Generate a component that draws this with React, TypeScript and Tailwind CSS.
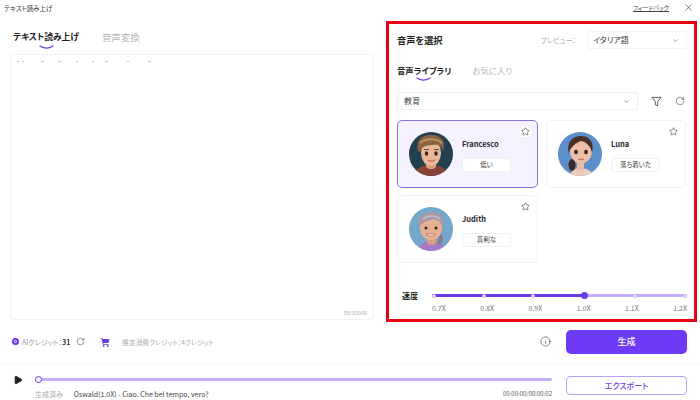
import { ChevronDown, Info, Play, RotateCw, Star, X } from "lucide-react";

const font = "[font-family:'Noto_Sans_CJK_JP',sans-serif] [font-feature-settings:'palt']";

function Smile({ className }: { className: string }) {
  return (
    <svg className={className} width="15" height="4" viewBox="0 0 15 4" fill="none">
      <path d="M1 1C5 3.6 10 3.6 14 1" stroke="#6d3be8" strokeWidth="1.3" strokeLinecap="round" />
    </svg>
  );
}

function Francesco() {
  return (
    <svg width="44" height="44" viewBox="0 0 44 44">
      <clipPath id="fr"><circle cx="22" cy="22" r="22" /></clipPath>
      <g clipPath="url(#fr)">
        <rect width="44" height="44" fill="#22404f" />
        <path d="M5 44C6 36 13 33 22 33S38 36 39 44Z" fill="#8a4238" />
        <path d="M17 28h10v7c-3 3-7 3-10 0Z" fill="#d99c7c" />
        <ellipse cx="22" cy="21" rx="10" ry="13" fill="#eab897" />
        <path d="M9 19C6 8 14 2 23 3C33 3 37 10 34 19C33 14 29 12 23 13C18 14 13 13 11 20Z" fill="#8a6340" />
        <path d="M11 11C17 6 27 6 33 11" stroke="#b8935f" strokeWidth="2" fill="none" />
        <ellipse cx="17.500" cy="21.500" rx="1.600" ry="2.200" fill="#2b2320" />
        <ellipse cx="27" cy="21.500" rx="1.600" ry="2.200" fill="#2b2320" />
        <path d="M15 17.500h5M25 17.500h5" stroke="#6b4a30" strokeWidth="1" />
        <path d="M18.500 28C21 29.500 24 29.500 26 28" stroke="#a55e4c" strokeWidth="1" fill="none" />
      </g>
    </svg>
  );
}

function Luna() {
  return (
    <svg width="44" height="44" viewBox="0 0 44 44">
      <clipPath id="lu"><circle cx="22" cy="22" r="22" /></clipPath>
      <g clipPath="url(#lu)">
        <rect width="44" height="44" fill="#5b8fc9" />
        <path d="M12 44C13 38 17 36 22 36S34 38 35 44Z" fill="#eccdb9" />
        <path d="M19 29h7v8c-2 2-5 2-7 0Z" fill="#e9bca3" />
        <ellipse cx="14" cy="33" rx="3.500" ry="6" fill="#3c2a26" />
        <ellipse cx="23" cy="19" rx="11" ry="12.500" fill="#eebfa6" />
        <path d="M11 21C8 10 15 4 23 4C31 4 37 10 34 21C33 15 29 10 23 9C18 11 13 14 11 21Z" fill="#4a302a" />
        <ellipse cx="18" cy="20" rx="1.800" ry="2.200" fill="#2b2320" />
        <ellipse cx="28" cy="20" rx="1.800" ry="2.200" fill="#2b2320" />
        <path d="M20 27C22 28 24 28 26 27" stroke="#b4604f" strokeWidth="1" fill="none" />
      </g>
    </svg>
  );
}

function Judith() {
  return (
    <svg width="44" height="44" viewBox="0 0 44 44">
      <clipPath id="ju"><circle cx="22" cy="22" r="22" /></clipPath>
      <g clipPath="url(#ju)">
        <rect width="44" height="44" fill="#74a7c9" />
        <path d="M9 44C10 37 16 34 22 34S36 37 37 44Z" fill="#a779c4" />
        <path d="M18 29h9v7c-3 3-6 3-9 0Z" fill="#d99f84" />
        <path d="M27 26C33 28 33 34 29 37" stroke="#8a7c88" strokeWidth="4" fill="none" />
        <ellipse cx="22" cy="21" rx="11" ry="12" fill="#e8b193" />
        <path d="M10 21C7 10 15 5 23 5C31 5 36 11 34 21C33 16 29 13 25 12C20 14 13 14 10 21Z" fill="#a79aa6" />
        <path d="M14 12C19 8 27 8 31 12" stroke="#c9bfc9" strokeWidth="1.400" fill="none" />
        <circle cx="17" cy="21" r="1.500" fill="#2b2320" />
        <circle cx="27" cy="21" r="1.500" fill="#2b2320" />
        <path d="M17 27C19 29.500 25 29.500 27 27Z" fill="#fff" stroke="#a55e4c" strokeWidth="0.7" />
      </g>
    </svg>
  );
}

const voices = [
  { name: "Francesco", tag: "低い", avatar: <Francesco />, active: true },
  { name: "Luna", tag: "落ち着いた", avatar: <Luna />, active: false },
  { name: "Judith", tag: "真剣な", avatar: <Judith />, active: false },
];

const speeds = ["0.7X", "0.8X", "0.9X", "1.0X", "1.1X", "1.2X"];

function VoiceCard({ voice }: { voice: (typeof voices)[number] }) {
  return (
    <div
      className={
        voice.active
          ? "relative flex h-[68px] items-center rounded-[5px] border border-[#8f6fe6] bg-[#f5f1ff] pl-[11px]"
          : "relative flex h-[68px] items-center rounded-[5px] border border-[#f3f3f5] bg-white pl-[11px]"
      }
    >
      {voice.avatar}
      <div className="ml-[9px] flex flex-col items-start pt-[2px]">
        <span className="text-[7.5px] leading-[12px] font-bold text-[#2b2b33]">{voice.name}</span>
        <span className="mt-[8px] flex h-[14px] w-[49px] items-center justify-center rounded-[3px] border border-[#f1f1f4] bg-white text-[6.5px] text-[#444]">
          {voice.tag}
        </span>
      </div>
      <span
        className={
          voice.active
            ? "absolute top-[5px] right-[6px] flex h-[11px] w-[11px] items-center justify-center rounded-[2px] bg-white"
            : "absolute top-[5px] right-[6px] flex h-[11px] w-[11px] items-center justify-center"
        }
      >
        <Star className="text-[#333]" size={9} strokeWidth={1.5} />
      </span>
    </div>
  );
}

export default function App() {
  return (
    <div className={`flex h-[400px] w-[700px] flex-col overflow-hidden bg-white ${font}`}>
      {/* title bar */}
      <div className="flex h-[15px] shrink-0 items-center justify-between pr-[6px] pl-[4px]">
        <span className="text-[6.5px] leading-[10px] text-[#333]">テキスト読み上げ</span>
        <div className="flex items-center gap-[14px]">
          <span className="text-[6px] leading-[10px] text-[#444] underline">フィードバック</span>
          <X size={11} strokeWidth={1.2} className="text-[#222]" />
        </div>
      </div>

      <div className="flex h-[307px] shrink-0 pt-[6px]">
        {/* left */}
        <div className="ml-[10px] flex w-[364px] flex-col">
          <div className="flex h-[33px] items-start gap-[23px] pt-[9px] pl-[3px]">
            <div className="relative">
              <span className="block text-[8.7px] leading-[14px] font-bold text-[#222]">テキスト読み上げ</span>
              <Smile className="absolute top-[15px] left-[26px]" />
            </div>
            <span className="text-[9.5px] leading-[14px] text-[#b5b5b5]">音声変換</span>
          </div>
          <div className="flex h-[266px] flex-col rounded-[3px] border border-[#f2f2f2] px-[6px] pt-[5px]">
            <svg width="135" height="3" viewBox="0 0 135 3" stroke="#c8c8c8" strokeWidth="1">
              <path d="M0 1.500h2M5 1.500h2M24 1.500h3M41 1.500h3M59 1.500h2M75 1.500h2M88 1.500h3M110 1.500h2M131 1.500h3" />
            </svg>
            <span className="mt-auto mb-[2px] self-end text-[5.5px] leading-[8px] text-[#aaa]">39/10000</span>
          </div>
        </div>

        {/* red box */}
        <div className="ml-[12px] flex h-[301px] w-[311px] flex-col border-[3px] border-[#e60012] pt-[7px] pr-[7px] pl-[8px]">
          <div className="flex h-[18px] items-center">
            <span className="text-[9.2px] leading-[14px] font-bold text-[#222]">音声を選択</span>
            <span className="ml-auto text-[7px] leading-[12px] text-[#aaa]">プレビュー：</span>
            <div className="ml-[11px] flex h-[18px] w-[100px] items-center justify-between rounded-[3px] border border-[#f3f3f3] pr-[7px] pl-[5px]">
              <span className="text-[8px] leading-[12px] text-[#333]">イタリア語</span>
              <ChevronDown size={7} className="text-[#999]" strokeWidth={3} />
            </div>
          </div>

          <div className="mt-[14px] flex h-[20px] items-start gap-[21px]">
            <div className="relative">
              <span className="block text-[8.4px] leading-[14px] font-bold text-[#222]">音声ライブラリ</span>
              <Smile className="absolute top-[14px] left-[19px]" />
            </div>
            <span className="text-[8.4px] leading-[14px] text-[#b5b5b5]">お気に入り</span>
          </div>

          <div className="mt-[9px] flex h-[18px] items-center">
            <div className="flex h-[18px] w-[241px] items-center justify-between rounded-[3px] border border-[#f1f1f1] pr-[7px] pl-[6px]">
              <span className="text-[8px] leading-[12px] text-[#444]">教育</span>
              <ChevronDown size={7} className="text-[#999]" strokeWidth={3} />
            </div>
            <svg className="ml-[13px]" width="11" height="11" viewBox="0 0 12 12" fill="none" stroke="#444" strokeWidth="0.9" strokeLinejoin="round">
              <path d="M1 1.500H11L7.300 6V10.800L4.700 9.600V6Z" />
            </svg>
            <RotateCw className="ml-[13px] text-[#333]" size={10} strokeWidth={1.3} />
          </div>

          <div className="mt-[10px] grid grid-cols-[141px_140px] gap-x-[8px] gap-y-[7px]">
            {voices.map((v) => (
              <VoiceCard key={v.name} voice={v} />
            ))}
          </div>

          {/* speed */}
          <div className="mt-[25px] flex items-start">
            <span className="mt-[1px] ml-[5px] whitespace-nowrap text-[8px] leading-[14px] font-bold text-[#222]">速度</span>
            <div className="ml-[14px] w-[256px]">
              <div className="relative mt-[6px] flex h-[3px] rounded-full bg-[#c4aefb]">
                <div className="h-[3px] w-[153px] rounded-full bg-[#6d3be8]" />
                <div className="absolute inset-0 flex items-center justify-between">
                  {speeds.map((s, i) => (
                    <span
                      key={s}
                      className={
                        i === 3
                          ? "h-[7px] w-[7px] rounded-full bg-[#6d3be8]"
                          : "h-[4px] w-[4px] rounded-full border border-[#c4aefb] bg-white"
                      }
                    />
                  ))}
                </div>
              </div>
              <div className="mt-[6px] flex justify-between text-[7px] leading-[10px] text-[#777]">
                {speeds.map((s) => (
                  <span key={s}>{s}</span>
                ))}
              </div>
            </div>
          </div>
        </div>
      </div>

      {/* credits row */}
      <div className="flex h-[42px] shrink-0 items-center border-b border-[#f6f6f6] pr-[13px] pb-[2px] pl-[12px]">
        <span className="flex h-[7px] w-[7px] items-center justify-center rounded-full bg-[#6d3be8]">
          <span className="h-[3px] w-[3px] rounded-full border border-white" />
        </span>
        <span className="ml-[3px] text-[7px] leading-[10px] text-[#999]">AIクレジット：</span>
        <span className="text-[7px] leading-[10px] font-bold text-[#333]">31</span>
        <RotateCw className="ml-[6px] text-[#444]" size={9} strokeWidth={1.4} />
        <svg className="ml-[15px]" width="10" height="10" viewBox="0 0 10 10" fill="#6d3be8">
          <path d="M0.500 1H2.200L2.600 2H9.500L8.500 6H3.400L3.600 7H8.600V7.800H2.900L1.600 1.800H0.500Z" />
          <circle cx="3.600" cy="8.900" r="0.900" />
          <circle cx="7.800" cy="8.900" r="0.900" />
        </svg>
        <span className="ml-[12px] text-[6.7px] leading-[10px] text-[#aaa]">推定消費クレジット：4クレジット</span>
        <Info className="ml-auto text-[#333]" size={11} strokeWidth={1.3} />
        <button className="ml-[15px] h-[24px] w-[121px] rounded-[5px] bg-[#6d3bf5] text-[9px] font-medium text-white">生成</button>
      </div>

      {/* player */}
      <div className="flex flex-1 items-start pt-[8px] pr-[13px] pl-[13px]">
        <Play className="mt-[3px] fill-[#222] text-[#222]" size={10} />
        <div className="ml-[12px] w-[517px]">
          <div className="relative mt-[6px] h-[3px] rounded-full bg-[#c4aefb]">
            <span className="absolute top-[-2px] left-0 h-[7px] w-[7px] rounded-full border border-[#6d3be8] bg-white" />
          </div>
          <div className="mt-[7px] flex items-center text-[7px] leading-[12px]">
            <span className="text-[#aaa]">生成済み</span>
            <span className="ml-[11px] text-[#444]">Oswald(1.0X) - Ciao. Che bel tempo, vero?</span>
            <span className="ml-auto text-[6px] text-[#555]">00:00:00/00:00:02</span>
          </div>
        </div>
        <button className="mt-[4px] ml-[14px] h-[19px] w-[121px] rounded-[4px] border border-[#b9a2f5] text-[8px] font-medium text-[#6d3be8]">
          エクスポート
        </button>
      </div>
    </div>
  );
}
